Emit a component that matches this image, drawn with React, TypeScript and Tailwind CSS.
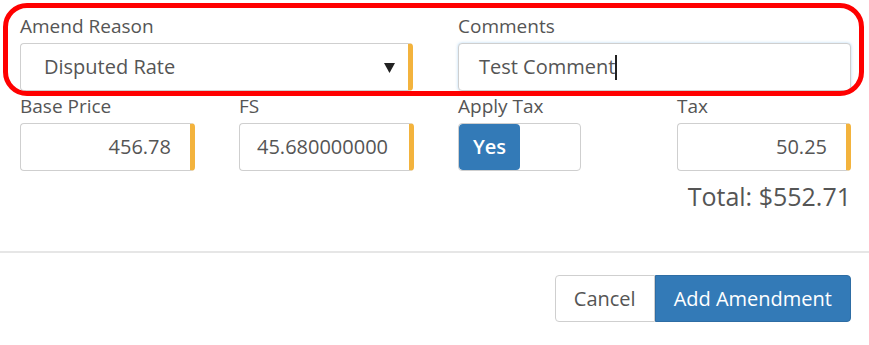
import React from "react"

const font = { fontFamily: '"Open Sans", "Liberation Sans", sans-serif' }

const inputBase =
  "h-[48px] w-full rounded-[4px] border border-[#cfcfcf] bg-white text-[20px] text-[#555] flex items-center"

const Label = ({ children }: { children: React.ReactNode }) => (
  <div className="h-[24px] text-[19px] leading-[24px] text-[#555] mb-[5px] whitespace-nowrap">{children}</div>
)

export default function App() {
  return (
    <div className="relative w-[869px] h-[345px] bg-white overflow-hidden" style={font}>
      <div className="pl-[20px] pr-[18px] pt-[14px]">
        {/* amend reason + comments */}
        <div className="grid grid-cols-2 gap-x-[45px]">
          <div>
            <Label>Amend Reason</Label>
            <div className={`${inputBase} border-r-[5px] border-r-[#f3b33d] pl-[23px] pr-[13px] justify-between`}>
              <span>Disputed Rate</span>
              <svg width="11" height="10" viewBox="0 0 11 10" className="mt-[2px]">
                <path d="M0 0 L11 0 L5.5 10 Z" fill="#222" />
              </svg>
            </div>
          </div>
          <div>
            <Label>Comments</Label>
            <div className={`${inputBase} border-[#86bdec] pl-[20px] shadow-[0_0_3px_rgba(102,175,233,0.5)]`}>
              <span>Test Comment</span>
              <span className="inline-block w-[2px] h-[25px] bg-[#222]" />
            </div>
          </div>
        </div>

        {/* price row */}
        <div className="grid grid-cols-[175px_175px_1fr_174px] gap-x-[44px] mt-[3px]">
          <div>
            <Label>Base Price</Label>
            <div className={`${inputBase} border-r-[5px] border-r-[#f3b33d] justify-end pr-[19px]`}>456.78</div>
          </div>
          <div>
            <Label>FS</Label>
            <div className={`${inputBase} border-r-[5px] border-r-[#f3b33d] pl-[17px] overflow-hidden whitespace-nowrap`}>
              45.680000000
            </div>
          </div>
          <div>
            <Label>Apply Tax</Label>
            <div className="h-[48px] w-[123px] rounded-[4px] border border-[#cfcfcf] bg-white flex overflow-hidden">
              <div className="w-[61px] h-full bg-[#337ab7] rounded-[4px] flex items-center justify-center text-white text-[20px] font-semibold">
                Yes
              </div>
            </div>
          </div>
          <div>
            <Label>Tax</Label>
            <div className={`${inputBase} border-r-[5px] border-r-[#f3b33d] justify-end pr-[19px]`}>50.25</div>
          </div>
        </div>

        <div className="mt-[10px] text-right text-[25px] leading-[30px] text-[#555]">Total: $552.71</div>
      </div>

      <div className="mt-[40px] h-[2px] bg-[#e6e6e6]" />

      <div className="flex justify-end pr-[18px] pt-[22px]">
        <button className="h-[47px] px-[18px] rounded-l-[4px] border border-[#cfcfcf] bg-white text-[20px] text-[#555]">
          Cancel
        </button>
        <button className="h-[47px] px-[18px] rounded-r-[4px] border border-[#2e6da4] bg-[#337ab7] text-[20px] text-white">
          Add Amendment
        </button>
      </div>

      {/* red highlight annotation */}
      <div className="absolute left-[3px] top-[3px] w-[861px] h-[93px] rounded-[24px] border-[5px] border-[#ff0000] pointer-events-none" />
    </div>
  )
}
